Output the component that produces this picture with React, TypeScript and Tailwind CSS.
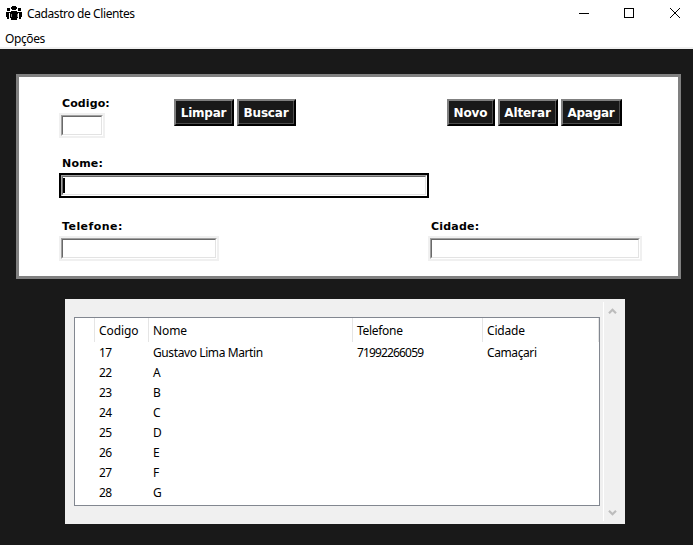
import React from "react";

const ui = "font-['Noto_Sans','Open_Sans',sans-serif]";

const rows = [
  ["17", "Gustavo Lima Martin", "71992266059", "Camaçari"],
  ["22", "A", "", ""],
  ["23", "B", "", ""],
  ["24", "C", "", ""],
  ["25", "D", "", ""],
  ["26", "E", "", ""],
  ["27", "F", "", ""],
  ["28", "G", "", ""],
];

function Label({ children, className }: { children: string; className: string }) {
  return (
    <div className={`mb-px h-[17px] pt-px whitespace-nowrap pl-[3px] text-[11px] leading-4 font-bold text-black ${className}`}>
      {children}
    </div>
  );
}

function Field({ width, focused }: { width: string; focused?: boolean }) {
  return (
    <div className={`h-[25px] border-2 ${focused ? "border-black" : "border-[#f0f0f0]"} ${width}`}>
      <div className="h-full border border-t-[#a0a0a0] border-r-white border-b-white border-l-[#a0a0a0]">
        <div className="h-full border border-t-[#696969] border-r-[#e3e3e3] border-b-[#e3e3e3] border-l-[#696969] bg-white pt-px">
          {focused && <div className="h-[15px] w-0.5 bg-black" />}
        </div>
      </div>
    </div>
  );
}

function PushButton({ children, className }: { children: string; className: string }) {
  return (
    <button className={`h-[27px] border-2 border-t-[#808080] border-r-black border-b-black border-l-[#808080] bg-[#191919] ${className}`}>
      <span className="flex h-full items-center justify-center border-r border-b border-[#4d4d4d] pt-px text-[12px] leading-4 font-bold text-white">
        {children}
      </span>
    </button>
  );
}

function Chevron({ down }: { down?: boolean }) {
  return (
    <svg width="9" height="7" viewBox="0 0 9 7" className={down ? "rotate-180" : ""}>
      <path d="M1 5.2 4.5 1.7 8 5.2" fill="none" stroke="#bcbcbc" strokeWidth="2.200" />
    </svg>
  );
}

export default function App() {
  return (
    <div className="flex h-[545px] w-[693px] flex-col overflow-hidden bg-[#191919] font-['DejaVu_Sans',sans-serif] text-black">
      <header className={`flex h-[27px] shrink-0 bg-white ${ui}`}>
        <svg width="16" height="14" viewBox="0 0 16 14" className="mt-[6px] ml-[6px]" fill="#000" shapeRendering="crispEdges">
          <path d="M6 0h4v1h1v2h-1v1H6V3H5V1h1z" />
          <path d="M1 2h3v3H1zM12 2h3v3h-3z" />
          <path d="M0 6h4v1H3v6H1v-2H0zM12 6h4v5h-1v2h-2V7h-1z" />
          <path d="M5 5h6v1h1v6h-1v2H5v-2H4V6h1z" />
          <path d="M5 8v3M11 8v3" stroke="#8a8a8a" strokeWidth="1" />
        </svg>
        <span className="ml-[5px] flex-1 text-[12px] leading-[28px] tracking-[-0.4px]">Cadastro de Clientes</span>
        <svg width="132" height="27" viewBox="0 0 132 27" fill="none" stroke="#000">
          <path d="M18 13.5h10M63.500 8.500h9v9h-9z" shapeRendering="crispEdges" />
          <path d="m109 8 10 10m0-10-10 10" />
        </svg>
      </header>
      <nav className={`h-[22px] shrink-0 border-b-2 border-[#f0f0f0] bg-white pl-[5px] text-[12px] leading-[24px] tracking-[-0.4px] ${ui}`}>Opções</nav>

      <section className="mt-[25px] ml-4 h-[205px] w-[665px] shrink-0 border-[3px] border-[#808080] bg-white pt-[18px] pl-10">
        <div className="flex h-[60px]">
          <div className="w-[115px]">
            <Label className="tracking-[0.1px]">Codigo:</Label>
            <Field width="w-[46px]" />
          </div>
          <div className="flex w-[273px] gap-[3px] pt-1">
            <PushButton className="w-[60px] tracking-[-0.25px]">Limpar</PushButton>
            <PushButton className="w-[59px] tracking-[-0.2px]">Buscar</PushButton>
          </div>
          <div className="flex gap-[3px] pt-1">
            <PushButton className="w-[48px] tracking-[-0.1px]">Novo</PushButton>
            <PushButton className="w-[60px] tracking-[-0.1px]">Alterar</PushButton>
            <PushButton className="w-[61px] tracking-[-0.25px]">Apagar</PushButton>
          </div>
        </div>
        <div className="h-[63px]">
          <Label className="tracking-[0.2px]">Nome:</Label>
          <Field width="w-[370px]" focused />
        </div>
        <div className="flex">
          <div className="w-[369px]">
            <Label className="tracking-[0.45px]">Telefone:</Label>
            <Field width="w-[160px]" />
          </div>
          <div>
            <Label className="tracking-[0.2px]">Cidade:</Label>
            <Field width="w-[214px]" />
          </div>
        </div>
      </section>

      <section className="mt-5 ml-[65px] flex h-[225px] w-[560px] shrink-0 bg-[#f0f0f0]">
        <div className={`mt-[18px] ml-[9px] h-[189px] w-[526px] border border-[#828790] bg-white text-[12px] tracking-[-0.4px] ${ui}`}>
          <div className="flex h-6 leading-[25px] tracking-[-0.1px] *:border-r *:border-[#e5e5e5]">
            <div className="w-5" />
            <div className="w-[54px] pl-1">Codigo</div>
            <div className="w-[204px] pl-1">Nome</div>
            <div className="w-[130px] pl-1 tracking-[-0.3px]">Telefone</div>
            <div className="w-[116px] pl-1 tracking-[-0.2px]">Cidade</div>
          </div>
          {rows.map((r) => (
            <div key={r[0]} className="flex h-5 pl-5 leading-[21px]">
              <div className="w-[54px] pl-1 tracking-[-0.7px]">{r[0]}</div>
              <div className="w-[204px] pl-1">{r[1]}</div>
              <div className="w-[130px] pl-1 tracking-[-0.85px]">{r[2]}</div>
              <div className="w-[116px] pl-1">{r[3]}</div>
            </div>
          ))}
        </div>
        <div className="my-[3px] ml-[3px] flex w-[18px] flex-col items-center justify-between border-l border-white pt-[6px] pb-[5px]">
          <Chevron />
          <Chevron down />
        </div>
      </section>
    </div>
  );
}
